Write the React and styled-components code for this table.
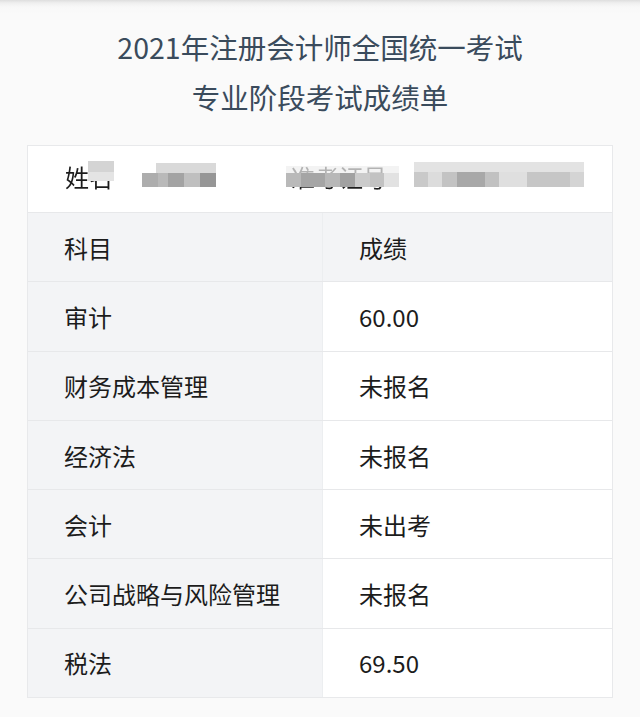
import styled, { createGlobalStyle } from "styled-components"

const GlobalStyle = createGlobalStyle`
  html, body {
    margin: 0;
    padding: 0;
  }
  body {
    background: #fafafa;
    font-family: "Noto Sans CJK SC", "Noto Sans", sans-serif;
  }
`

const Page = styled.div`
  min-height: 717px;
  box-sizing: border-box;
  padding: 22px 27px 0;
  background: linear-gradient(#dedede 0, #efefef 3px, #f8f8f8 7px, #fafafa 14px);
`

const Title = styled.h1`
  margin: 0;
  text-align: center;
  font-size: 28.5px;
  font-weight: 400;
  line-height: 50px;
  color: #3a4b5c;
`

const Table = styled.div`
  margin-top: 23px;
  width: 586px;
  border: 1px solid #e8e9eb;
  box-sizing: border-box;
  background: #fff;
`

const NameRow = styled.div`
  height: 66px;
  display: flex;
  align-items: center;
  padding: 0 0 6px 37px;
  box-sizing: border-box;
  font-size: 24px;
  color: #1c1c1c;
`

const Masked = styled.div`
  position: relative;
  flex: none;
  height: 30px;
  display: flex;
  align-items: center;
  width: ${p => p.$w}px;
  margin-left: ${p => p.$ml}px;
  filter: blur(${p => p.$blur}px);
`

const Label = styled.span`
  white-space: nowrap;
  padding-left: ${p => p.$pl || 0}px;
`

const Mosaic = styled.div`
  position: absolute;
  left: ${p => p.$l}px;
  top: ${p => p.$t}px;
  width: ${p => p.$w}px;
  height: ${p => p.$h}px;
  display: flex;
  flex-direction: column;
`

const Strip = styled.div`
  height: ${p => p.$h}px;
  margin-left: ${p => p.$indent || 0}px;
  background: ${p => p.$c};
`

const MosaicLine = styled.div`
  display: flex;
  flex: 1;
`

const Cell = styled.div`
  flex: ${p => p.$g};
  background: ${p => p.$c};
`

const Row = styled.div`
  display: grid;
  grid-template-columns: 294px 1fr;
  height: 69.3px;
  border-top: 1px solid #e7e8ea;
  box-sizing: border-box;
`

const Cell2 = styled.div`
  display: flex;
  align-items: center;
  padding-left: 36px;
  font-size: 24px;
  color: #1c1c1c;
  background: ${p => (p.$gray ? "#f3f4f6" : "#fff")};
  border-left: ${p => (p.$right ? "1px solid #eceef0" : "none")};
`

const rows = [
  ["审计", "60.00"],
  ["财务成本管理", "未报名"],
  ["经济法", "未报名"],
  ["会计", "未出考"],
  ["公司战略与风险管理", "未报名"],
  ["税法", "69.50"],
]

function Pixels({ l, t, w, h, top, topH, indent, cells }) {
  return (
    <Mosaic $l={l} $t={t} $w={w} $h={h}>
      <Strip $h={topH} $indent={indent} $c={top} />
      <MosaicLine>
        {cells.map(([g, c], i) => <Cell key={i} $g={g} $c={c} />)}
      </MosaicLine>
    </Mosaic>
  )
}

export default function App() {
  return (
    <>
      <GlobalStyle />
      <Page>
        <Title>2021年注册会计师全国统一考试</Title>
        <Title>专业阶段考试成绩单</Title>
        <Table>
          <NameRow>
            <Masked $w={76} $ml={0} $blur={0.3}>
              <Label>姓名</Label>
              <Pixels
                l={23} t={0} w={26} h={20}
                top="#d4d4d4" topH={11} indent={0}
                cells={[[1, "#e4e4e4"]]}
              />
            </Masked>
            <Masked $w={74} $ml={1} $blur={0.6}>
              <Pixels
                l={0} t={2} w={74} h={24}
                top="#d9d9d9" topH={10} indent={14}
                cells={[[3, "#adadad"], [2, "#b9b9b9"], [3, "#a3a3a3"], [3, "#bfbfbf"], [3, "#969696"]]}
              />
            </Masked>
            <Masked $w={113} $ml={70} $blur={0.7}>
              <Label $pl={5}>准考证号</Label>
              <Pixels
                l={0} t={5} w={113} h={21}
                top="rgba(238,238,238,0.72)" topH={7} indent={0}
                cells={[[3, "#b9b9b9"], [5, "#a5a5a5"], [3, "#b8b8b8"], [3, "#a1a1a1"], [3, "#cbcbcb"], [3, "#c2c2c2"], [3, "#e2e2e2"]]}
              />
            </Masked>
            <Masked $w={170} $ml={15} $blur={0.7}>
              <Pixels
                l={0} t={1} w={170} h={25}
                top="#e3e3e3" topH={10} indent={0}
                cells={[[3, "#c9c9c9"], [3, "#dcdcdc"], [3, "#c3c3c3"], [6, "#a8a8a8"], [3, "#c1c1c1"], [6, "#dfdfdf"], [9, "#c6c6c6"], [3, "#d4d4d4"]]}
              />
            </Masked>
          </NameRow>
          <Row>
            <Cell2 $gray>科目</Cell2>
            <Cell2 $gray $right>成绩</Cell2>
          </Row>
          {rows.map(([k, v]) => (
            <Row key={k}>
              <Cell2 $gray>{k}</Cell2>
              <Cell2 $right>{v}</Cell2>
            </Row>
          ))}
        </Table>
      </Page>
    </>
  )
}
